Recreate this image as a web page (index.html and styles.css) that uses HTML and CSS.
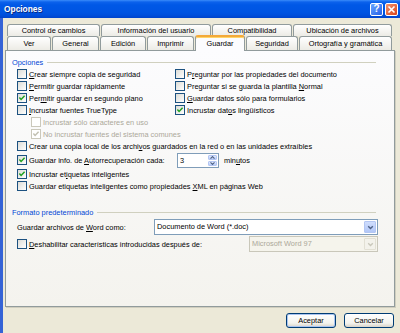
FILE: index.html
```html
<!DOCTYPE html>
<html lang="es">
<head>
<meta charset="utf-8">
<title>Opciones</title>
<link rel="stylesheet" href="styles.css">
</head>
<body>
<div class="window">
  <div class="titlebar">
    <span class="title">Opciones</span>
    <div class="tb-buttons">
      <span class="tb-btn help">?</span>
      <span class="tb-btn close"><svg width="9" height="9" viewBox="0 0 9 9"><path d="M1.5 1.5 L7.5 7.5 M7.5 1.5 L1.5 7.5" stroke="#fff" stroke-width="1.6" fill="none"/></svg></span>
    </div>
  </div>
  <div class="client">
    <div class="tabs">
      <div class="tabrow row1">
        <div class="tab">Control de cambios</div>
        <div class="tab">Información del usuario</div>
        <div class="tab">Compatibilidad</div>
        <div class="tab">Ubicación de archivos</div>
      </div>
      <div class="tabrow row2">
        <div class="tab">Ver</div>
        <div class="tab">General</div>
        <div class="tab">Edición</div>
        <div class="tab">Imprimir</div>
        <div class="tab selected">Guardar</div>
        <div class="tab">Seguridad</div>
        <div class="tab">Ortografía y gramática</div>
      </div>
    </div>
    <div class="panel">
      <div class="group">
        <div class="legend">Opciones</div>
        <div class="grid2">
          <div class="cb"><span class="box"></span><span><u>C</u>rear siempre copia de seguridad</span></div>
          <div class="cb"><span class="box"></span><span>P<u>r</u>eguntar por las propiedades del documento</span></div>
          <div class="cb"><span class="box"></span><span><u>P</u>ermitir guardar rápidamente</span></div>
          <div class="cb"><span class="box"></span><span>Preguntar si se guarda la plantilla <u>N</u>ormal</span></div>
          <div class="cb"><span class="box checked"><svg width="8" height="8" viewBox="0 0 8 8"><path d="M1.4 3.6 L3.1 5.5 L6.6 1.8" stroke="#21A121" stroke-width="1.5" fill="none"/></svg></span><span>Per<u>m</u>itir guardar en segundo plano</span></div>
          <div class="cb"><span class="box"></span><span><u>G</u>uardar datos sólo para formularios</span></div>
          <div class="cb"><span class="box"></span><span><u>I</u>ncrustar fuentes TrueType</span></div>
          <div class="cb"><span class="box checked"><svg width="8" height="8" viewBox="0 0 8 8"><path d="M1.4 3.6 L3.1 5.5 L6.6 1.8" stroke="#21A121" stroke-width="1.5" fill="none"/></svg></span><span>Incrustar dat<u>o</u>s lingüísticos</span></div>
        </div>
        <div class="row sub"><div class="cb disabled"><span class="box"></span><span>Incrustar sólo caracteres en uso</span></div></div>
        <div class="row sub"><div class="cb disabled"><span class="box"><svg width="8" height="8" viewBox="0 0 8 8"><path d="M1.4 3.6 L3.1 5.5 L6.6 1.8" stroke="#C2C0B2" stroke-width="1.5" fill="none"/></svg></span><span>No incrustar fuentes del sistema comunes</span></div></div>
        <div class="row"><div class="cb"><span class="box"></span><span>Crear una copia local de los archi<u>v</u>os guardados en la red o en las unidades extraíbles</span></div></div>
        <div class="row spinrow">
          <div class="cb"><span class="box"><svg width="8" height="8" viewBox="0 0 8 8"><path d="M1.4 3.6 L3.1 5.5 L6.6 1.8" stroke="#21A121" stroke-width="1.5" fill="none"/></svg></span><span>Guardar info. de <u>A</u>utorrecuperación cada:</span></div>
          <div class="spinwrap">
            <div class="spin">
              <span class="val">3</span>
              <span class="arrows">
                <span class="arr"><svg width="5" height="3" viewBox="0 0 5 3"><path d="M0.5 2.6 L2.5 0.6 L4.5 2.6" stroke="#4D6185" stroke-width="1.1" fill="none"/></svg></span>
                <span class="arr"><svg width="5" height="3" viewBox="0 0 5 3"><path d="M0.5 0.4 L2.5 2.4 L4.5 0.4" stroke="#4D6185" stroke-width="1.1" fill="none"/></svg></span>
              </span>
            </div>
            <span>min<u>u</u>tos</span>
          </div>
        </div>
        <div class="row"><div class="cb"><span class="box"><svg width="8" height="8" viewBox="0 0 8 8"><path d="M1.4 3.6 L3.1 5.5 L6.6 1.8" stroke="#21A121" stroke-width="1.5" fill="none"/></svg></span><span>Incrustar et<u>i</u>quetas inteligentes</span></div></div>
        <div class="row"><div class="cb"><span class="box"></span><span>Guardar etiquetas inteligentes como propiedades <u>X</u>ML en páginas Web</span></div></div>
      </div>
      <div class="group group2">
        <div class="legend">Formato predeterminado</div>
        <div class="saveas">
          <span>Guardar archivos de <u>W</u>ord como:</span>
          <div class="select">
            <span class="txt">Documento de Word (*.doc)</span>
            <span class="dd"><svg width="7" height="5" viewBox="0 0 7 5"><path d="M1.2 1.2 L3.5 3.5 L5.8 1.2" stroke="#4D6185" stroke-width="1.4" fill="none"/></svg></span>
          </div>
        </div>
        <div class="disablerow">
          <div class="cb"><span class="box"></span><span><u>D</u>eshabilitar características introducidas después de:</span></div>
          <div class="select off">
            <span class="txt">Microsoft Word 97</span>
            <span class="dd"><svg width="7" height="5" viewBox="0 0 7 5"><path d="M1.2 1.2 L3.5 3.5 L5.8 1.2" stroke="#C9C7BA" stroke-width="1.4" fill="none"/></svg></span>
          </div>
        </div>
      </div>
    </div>
    <div class="footer">
      <div class="btn default">Aceptar</div>
      <div class="btn">Cancelar</div>
    </div>
  </div>
</div>
</body>
</html>
```
FILE: styles.css
```css
* { box-sizing: border-box; }
html, body { margin: 0; padding: 0; }
body {
  width: 400px;
  height: 333px;
  overflow: hidden;
  background: #ECE9D8;
  font-family: "Liberation Sans", Arial, sans-serif;
  font-size: 7.4px;
  color: #000;
}
u { text-decoration-thickness: 1px; text-underline-offset: 1px; }
.window { width: 400px; height: 333px; display: flex; flex-direction: column; }
.titlebar {
  height: 18px;
  flex: none;
  display: flex;
  align-items: center;
  justify-content: space-between;
  padding: 0 2px 0 4px;
  background: linear-gradient(#3A8CFA 0, #0C62EC 2px, #0058E6 5px, #0055E3 12px, #0050DC 15px, #0044CC 18px);
}
.title { color: #fff; font-weight: bold; font-size: 8.4px; text-shadow: 1px 1px 0 #0A2A80; }
.tb-buttons { display: flex; gap: 2px; }
.tb-btn {
  width: 13px;
  height: 13px;
  border: 1px solid #fff;
  border-radius: 2px;
  display: flex;
  align-items: center;
  justify-content: center;
  color: #fff;
  font-weight: bold;
  font-size: 10px;
  line-height: 1;
}
.help { background: linear-gradient(135deg, #6AA6FF, #2460E8); }
.close { background: linear-gradient(135deg, #F29470, #D8431B); }
.client {
  flex: 1;
  border-left: 3px solid #3563D6;
  padding: 6px 3px 0 2px;
  display: flex;
  flex-direction: column;
}
.tabs { margin-left: 2px; }
.tabrow { display: grid; }
.row1 { grid-template-columns: 94px 111px 81px 100px; height: 12px; }
.row2 { grid-template-columns: 45px 48px 47px 48px 51px 53px 94px; height: 14px; }
.tab {
  border: 1px solid #919B9C;
  border-bottom: none;
  border-radius: 3px 3px 0 0;
  background: linear-gradient(#FFFFFF, #ECEBE5);
  text-align: center;
  white-space: nowrap;
  margin-right: 1px;
}
.row1 .tab { line-height: 11px; }
.row2 .tab { line-height: 13px; }
.tab.selected {
  position: relative;
  z-index: 1;
  background: #FCFCFE;
  border-top: 2px solid #F3A93A;
  box-shadow: inset 0 1px 0 #FFD56A;
  margin-top: -1px;
  margin-bottom: -1px;
  line-height: 14px;
}
.panel {
  width: 390px;
  height: 257px;
  flex: none;
  border: 1px solid #919B9C;
  background: linear-gradient(#FCFCFE, #F4F3EE);
  padding: 5px 16px 0 6px;
  box-shadow: 1px 1px 0 #D0CEBF;
}
.legend {
  display: flex;
  align-items: center;
  gap: 4px;
  height: 12px;
  color: #0046D5;
}
.legend::after {
  content: "";
  flex: 1;
  border-top: 1px solid #D0D0BF;
  margin-right: 2px;
}
.grid2 {
  display: grid;
  grid-template-columns: 158px 1fr;
  grid-auto-rows: 12px;
  padding-left: 5px;
}
.row { height: 12px; display: flex; align-items: center; padding-left: 5px; }
.row.sub { padding-left: 19px; }
.cb { display: flex; align-items: center; gap: 2px; white-space: nowrap; }
.box {
  width: 10px;
  height: 10px;
  flex: none;
  border: 1px solid #1C5180;
  background: linear-gradient(135deg, #DCDCD7, #FFFFFF);
  display: flex;
  align-items: center;
  justify-content: center;
}
.disabled { color: #ACA899; }
.disabled .box { border-color: #CAC8BB; background: #FFFFFF; }
.spinrow { height: 16px; display: grid; grid-template-columns: 158px 1fr; align-items: center; }
.spinwrap { display: flex; align-items: center; gap: 5px; margin-left: 2px; }
.spin {
  width: 42px;
  height: 15px;
  display: flex;
  border: 1px solid #7F9DB9;
  background: #fff;
}
.spin .val { flex: 1; padding-left: 2px; line-height: 13px; }
.spin .arrows { width: 11px; display: flex; flex-direction: column; gap: 1px; padding: 1px; }
.spin .arr {
  flex: 1;
  background: linear-gradient(#E3EBFE, #B9CDF8);
  border: 1px solid #B3C6F3;
  border-radius: 1px;
  display: flex;
  align-items: center;
  justify-content: center;
}
.group2 { margin-top: 14px; }
.saveas {
  margin-top: 1px;
  height: 16px;
  display: grid;
  grid-template-columns: 137px 1fr;
  align-items: center;
  padding-left: 5px;
}
.disablerow {
  margin-top: 1px;
  height: 16px;
  display: flex;
  align-items: center;
  justify-content: space-between;
  padding-left: 5px;
}
.select {
  height: 16px;
  display: flex;
  border: 1px solid #7F9DB9;
  background: #fff;
}
.select .txt { flex: 1; padding-left: 2px; line-height: 14px; white-space: nowrap; }
.select .dd {
  width: 12px;
  margin: 1px;
  background: linear-gradient(#CFDDFD, #B2C7F7);
  border: 1px solid #B3C6F3;
  border-radius: 1px;
  display: flex;
  align-items: center;
  justify-content: center;
}
.select.off { width: 129px; border-color: #C9C7BA; background: #F5F4EC; color: #ACA899; }
.select.off .dd { background: #F3F2EB; border-color: #E2E0D4; }
.footer {
  margin-top: 6px;
  display: flex;
  justify-content: flex-end;
  gap: 8px;
  padding-right: 3px;
}
.btn {
  width: 50px;
  height: 15px;
  border: 1px solid #003C74;
  border-radius: 3px;
  background: linear-gradient(#FFFFFF, #F3F3EE 70%, #D8D3C8);
  display: flex;
  align-items: center;
  justify-content: center;
}
.btn.default { box-shadow: inset 0 0 0 1px #A9C4F0; }
```
